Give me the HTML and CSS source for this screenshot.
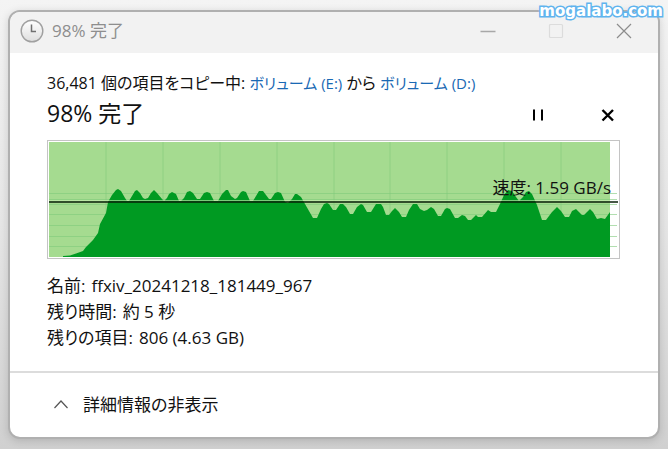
FILE: index.html
```html
<!DOCTYPE html>
<html lang="ja">
	<head>
		<meta charset="UTF-8" />
		<meta name="viewport" content="width=device-width, initial-scale=1.0" />
		<title>98% 完了</title>
		<link rel="stylesheet" href="styles.css">
	</head>
	<body>
		<div class="watermark">mogalabo.com</div>

		<main class="window">
			<header class="titlebar">
				<svg class="clock" viewBox="0 0 24 24" aria-hidden="true">
					<defs>
						<linearGradient id="face" x1="0" y1="0" x2="0" y2="1">
							<stop offset="0" stop-color="#ffffff" />
							<stop offset="1" stop-color="#dedede" />
						</linearGradient>
					</defs>
					<circle cx="12" cy="12" r="10.8" fill="url(#face)" stroke="#a0a0a0" stroke-width="1.4" />
					<path d="M11.5 5.5V12.5H16" fill="none" stroke="#707070" stroke-width="1.5" />
				</svg>
				<span class="title">98% 完了</span>
				<button class="control" type="button" aria-label="最小化">
					<svg viewBox="0 0 16 16"><path d="M0.5 8.5H15.5" stroke="#a8a8a8" stroke-width="1.4" /></svg>
				</button>
				<button class="control" type="button" aria-label="最大化" disabled>
					<svg viewBox="0 0 16 16"><rect x="1.5" y="1.5" width="13" height="13" rx="1" fill="none" stroke="#dcdcdc" stroke-width="1.2" /></svg>
				</button>
				<button class="control" type="button" aria-label="閉じる">
					<svg viewBox="0 0 16 16"><path d="M1 1L15 15M15 1L1 15" stroke="#8c8c8c" stroke-width="1.2" /></svg>
				</button>
			</header>

			<section class="content">
				<p class="summary">36,481 個の項目をコピー中: <a href="#">ボリューム (E:)</a> から <a href="#">ボリューム (D:)</a></p>
				<div class="progress">
					<h1>98% 完了</h1>
					<button class="action" type="button" aria-label="一時停止">
						<svg viewBox="0 0 14 14"><path d="M3 1.5V12.5M11 1.5V12.5" stroke="#000" stroke-width="2" /></svg>
					</button>
					<button class="action" type="button" aria-label="キャンセル">
						<svg viewBox="0 0 14 14"><path d="M1.5 2L12 12.5M12 2L1.5 12.5" stroke="#000" stroke-width="2.4" /></svg>
					</button>
				</div>

				<div class="chart">
					<svg viewBox="0 0 571 117" preserveAspectRatio="none" aria-hidden="true">
						<rect x="1" y="1" width="561" height="115" fill="#a5db90" />
						<!-- grid -->
						<path d="M58 1V116M115 1V116M172 1V116M229 1V116M286 1V116M342 1V116M399 1V116M456 1V116M513 1V116" stroke="#8fd082" />
						<path d="M1 52.5H569M1 58.5H569M1 63.5H569M1 73.5H569M1 84.5H569M1 95.5H569M1 105.5H569" stroke="#7fca7c" stroke-opacity="0.6" />
						<!-- speed -->
						<path d="M15 116L15 115L22 114.5L28 112.5L35 110L38 106L45 99L50 92L52 83L58 72L60 61L64 54L68 49L70 48L73 50L77 57L79 60L81 60L84 55L87 50L89 49L92 52L95 57L97 58L100 57L103 52L106 49L109 52L114 58L116 60L119 57L121 53L124 51L128 53L131 60L133 60L136 57L139 51L142 50L145 52L149 58L152 58L156 52L159 51L162 52L166 60L170 60L174 53L178 49L180 49L183 55L187 58L189 57L193 51L195 50L198 51L202 60L205 60L208 55L211 50L215 50L218 54L221 58L223 58L227 52L230 51L233 52L237 61L240 62L244 58L247 53L249 53L253 56L257 63L265 77L269 77L273 68L276 63L279 62L281 63L285 69L288 69L292 63L295 63L298 66L302 73L305 73L309 66L313 63L315 64L319 71L323 71L328 63L333 63L335 66L338 74L341 74L344 70L347 67L351 71L354 76L358 76L361 69L365 63L369 63L372 68L376 70L379 69L383 66L386 68L390 75L393 75L397 68L399 67L402 68L407 77L410 77L414 74L417 75L420 79L423 79L428 74L430 76L434 76L440 69L443 71L448 71L452 63L456 54L460 49L464 50L468 56L471 60L475 56L478 51L481 50L484 53L489 64L494 79L498 79L504 71L509 66L513 70L517 76L521 76L524 70L528 68L534 74L536 74L542 68L545 71L549 78L553 77L557 78L562 71V116Z" fill="#009a22" />
						<path d="M1 59.5H562" stroke="#c9f0b4" stroke-opacity="0.6" />
						<path d="M1 61H570" stroke="#0a1f08" stroke-width="1.6" />
					</svg>
					<span class="speed">速度: 1.59 GB/s</span>
				</div>

				<dl class="details">
					<div><dt>名前:</dt><dd>ffxiv_20241218_181449_967</dd></div>
					<div><dt>残り時間:</dt><dd>約 5 秒</dd></div>
					<div><dt>残りの項目:</dt><dd>806 (4.63 GB)</dd></div>
				</dl>
			</section>

			<footer class="footer">
				<button class="toggle" type="button">
					<svg viewBox="0 0 16 16" aria-hidden="true"><path d="M1.5 11L8 4L14.5 11" fill="none" stroke="#555" stroke-width="1.2" /></svg>
					詳細情報の非表示
				</button>
			</footer>
		</main>
	</body>
</html>
```
FILE: styles.css
```css
* {
	box-sizing: border-box;
}

body {
	margin: 0;
	padding: 10px 8px 10px;
	min-height: 100vh;
	display: flex;
	background: linear-gradient(#f4f4f4, #e6e6e6 50%, #d0d0d0);
	color: #111;
	font-family: "Open Sans", "Noto Sans CJK JP", sans-serif;
	font-size: 17px;
	font-feature-settings: "palt";
}

button {
	border: 0;
	padding: 0;
	background: none;
	color: inherit;
	font: inherit;
	font-feature-settings: inherit;
}

.watermark {
	position: absolute;
	top: 0;
	right: 5px;
	z-index: 1;
	color: #fff;
	font: bold 15px/22px "DejaVu Sans", sans-serif;
	-webkit-text-stroke: 3px #5fb4ee;
	paint-order: stroke fill;
}

.window {
	flex: 1;
	display: flex;
	flex-direction: column;
	border: 2px solid #b0b0b0;
	border-radius: 12px;
	background: #fff;
	overflow: hidden;
	box-shadow: 0 2px 8px rgba(0, 0, 0, 0.15);
}

.titlebar {
	display: flex;
	align-items: center;
	height: 41px;
	padding: 0 0 4px 10px;
	background: #f2f2f2;
}

.clock {
	width: 24px;
	height: 24px;
}

.title {
	flex: 1;
	margin-left: 8px;
	color: #8e8e8e;
	line-height: 24px;
}

.control {
	display: grid;
	place-items: center;
	width: 68px;
	height: 36px;
}

.control svg,
.toggle svg {
	width: 16px;
	height: 16px;
}

.content {
	padding: 18px 38px 20px 37px;
}

.summary {
	margin: 0;
	font-size: 16px;
	line-height: 24px;
	white-space: nowrap;
}

.summary a {
	color: #1a69b4;
	font-size: 15px;
	text-decoration: none;
}

.progress {
	display: flex;
	align-items: center;
	height: 36px;
}

.progress h1 {
	flex: 1;
	margin: 0;
	font-size: 23px;
	font-weight: normal;
	line-height: 36px;
}

.action {
	display: grid;
	place-items: center;
	width: 24px;
	height: 24px;
	margin: 4px 0 0 46px;
}

.action svg {
	width: 14px;
	height: 14px;
}

.chart {
	position: relative;
	margin-top: 9px;
	border: 1px solid #c4c4c4;
}

.chart svg {
	display: block;
	width: 100%;
	height: 117px;
}

.speed {
	position: absolute;
	right: 8px;
	top: 35px;
	line-height: 24px;
}

.details {
	margin: 14px 0 0;
	line-height: 26px;
}

.details div {
	display: flex;
	gap: 6px;
}

.details dd {
	margin: 0;
}

.footer {
	flex: 1;
	display: flex;
	align-items: center;
	padding-left: 43px;
	border-top: 2px solid #dcdcdc;
}

.toggle {
	display: flex;
	align-items: center;
	gap: 14px;
	line-height: 24px;
}
```
